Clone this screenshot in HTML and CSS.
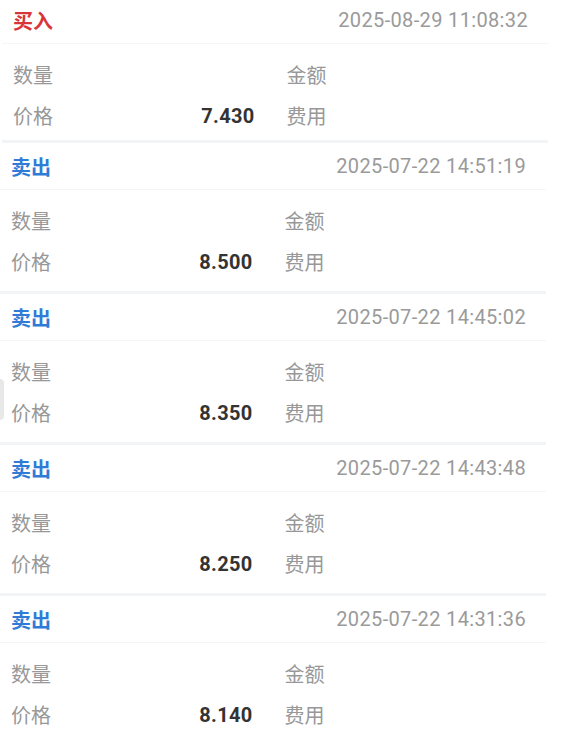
FILE: index.html
```html
<!DOCTYPE html>
<html lang="zh-CN">
<head>
    <meta charset="utf-8">
    <meta name="viewport" content="width=device-width, initial-scale=1">
    <title>成交记录</title>
    <link rel="stylesheet" href="styles.css">
</head>
<body>
    <div class="edge-handle"></div>
    <ul class="trades">
        <li class="trade first">
            <div class="trade-head">
                <span class="side buy">买入</span>
                <span class="time">2025-08-29 11:08:32</span>
            </div>
            <div class="trade-body">
                <div class="field"><span class="label">数量</span><span class="value"></span></div>
                <div class="field"><span class="label">金额</span><span class="value"></span></div>
                <div class="field"><span class="label">价格</span><span class="value">7.430</span></div>
                <div class="field"><span class="label">费用</span><span class="value"></span></div>
            </div>
        </li>
        <li class="trade">
            <div class="trade-head">
                <span class="side sell">卖出</span>
                <span class="time">2025-07-22 14:51:19</span>
            </div>
            <div class="trade-body">
                <div class="field"><span class="label">数量</span><span class="value"></span></div>
                <div class="field"><span class="label">金额</span><span class="value"></span></div>
                <div class="field"><span class="label">价格</span><span class="value">8.500</span></div>
                <div class="field"><span class="label">费用</span><span class="value"></span></div>
            </div>
        </li>
        <li class="trade">
            <div class="trade-head">
                <span class="side sell">卖出</span>
                <span class="time">2025-07-22 14:45:02</span>
            </div>
            <div class="trade-body">
                <div class="field"><span class="label">数量</span><span class="value"></span></div>
                <div class="field"><span class="label">金额</span><span class="value"></span></div>
                <div class="field"><span class="label">价格</span><span class="value">8.350</span></div>
                <div class="field"><span class="label">费用</span><span class="value"></span></div>
            </div>
        </li>
        <li class="trade">
            <div class="trade-head">
                <span class="side sell">卖出</span>
                <span class="time">2025-07-22 14:43:48</span>
            </div>
            <div class="trade-body">
                <div class="field"><span class="label">数量</span><span class="value"></span></div>
                <div class="field"><span class="label">金额</span><span class="value"></span></div>
                <div class="field"><span class="label">价格</span><span class="value">8.250</span></div>
                <div class="field"><span class="label">费用</span><span class="value"></span></div>
            </div>
        </li>
        <li class="trade">
            <div class="trade-head">
                <span class="side sell">卖出</span>
                <span class="time">2025-07-22 14:31:36</span>
            </div>
            <div class="trade-body">
                <div class="field"><span class="label">数量</span><span class="value"></span></div>
                <div class="field"><span class="label">金额</span><span class="value"></span></div>
                <div class="field"><span class="label">价格</span><span class="value">8.140</span></div>
                <div class="field"><span class="label">费用</span><span class="value"></span></div>
            </div>
        </li>
    </ul>
</body>
</html>
```

FILE: styles.css
```css
html {
    color: #333333;
    font-family: Roboto, "Noto Sans CJK SC", sans-serif;
    font-size: 20px;
}

body {
    margin: 0;
    background: white;
    overflow: hidden;
}

.trades {
    list-style: none;
    margin: -3px 0 0 0;
    padding: 0;
    width: 546px;
}

.trade {
    border-bottom: 3px solid #f3f4f6;
}

/* first row is caught a little off its rest position */
.trade.first {
    transform: translateX(2px);
}

.trade.first .trade-body {
    padding-bottom: 4px;
}

.trade-head {
    display: flex;
    justify-content: space-between;
    align-items: center;
    height: 46px;
    padding: 0 20px 0 11px;
    border-bottom: 1px solid #f4f5f7;
}

.side {
    font-family: "Noto Sans CJK SC", sans-serif;
    font-size: 20px;
    font-weight: 700;
}

.buy {
    color: #d8353b;
}

.sell {
    color: #2f7bd6;
}

.time {
    color: #9a9a9a;
    font-size: 20px;
    letter-spacing: 0.35px;
}

.trade-body {
    display: grid;
    grid-template-columns: 1fr 1fr;
    column-gap: 32px;
    padding: 10px 20px 9px 11px;
}

.field {
    display: flex;
    justify-content: space-between;
    align-items: center;
    height: 41px;
}

.label {
    font-family: "Noto Sans CJK SC", sans-serif;
    color: #989898;
    font-size: 20px;
}

.value {
    font-size: 20px;
    font-weight: 700;
    color: #333333;
    letter-spacing: 0.3px;
}

/* small tab stuck to the screen edge */
.edge-handle {
    position: absolute;
    left: 0;
    top: 379px;
    width: 4px;
    height: 41px;
    background: #e8e8e8;
    border-radius: 0 4px 4px 0;
}
```
